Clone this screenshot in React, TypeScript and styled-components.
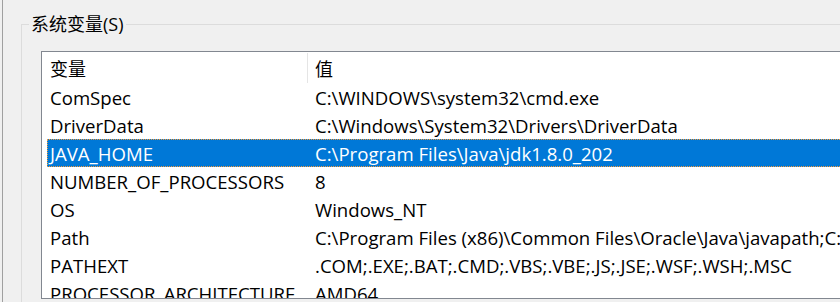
import styled, { createGlobalStyle } from 'styled-components'

const GlobalStyle = createGlobalStyle`
  html, body {
    margin: 0;
    padding: 0;
    background: #f0f0f0;
    overflow: hidden;
  }
  body {
    font-family: 'Open Sans', 'Noto Sans CJK SC', sans-serif;
    font-size: 18.6px;
    color: #000;
  }
`

const Window = styled.div`
  width: 840px;
  height: 302px;
  overflow: hidden;
  padding-left: 2px;
  box-sizing: border-box;
`

const Pane = styled.div`
  height: 100%;
  border-left: 1px solid #a0a0a0;
  padding-left: 18px;
  padding-top: 12px;
  box-sizing: border-box;
`

const Group = styled.fieldset`
  margin: 0;
  padding: 14px 0 0 0;
  border: 1px solid #dcdcdc;
  border-right: none;
  border-bottom: none;
  min-width: 0;
  height: 400px;
`

const Legend = styled.legend`
  margin-left: 7px;
  padding: 0 2px;
  line-height: 25px;
  font-size: 18px;
`

const ListBox = styled.div`
  width: 1000px;
  height: 248px;
  margin-left: 19px;
  box-sizing: border-box;
  border: 1px solid #828790;
  background: #fff;
  overflow: hidden;
`

const Header = styled.div`
  display: grid;
  grid-template-columns: 266px 1fr;
  height: 31px;
  align-items: stretch;
  font-size: 18px;
`

const HeaderCell = styled.div<{ $indent: number; $divider?: boolean }>`
  display: flex;
  align-items: center;
  padding-left: ${({ $indent }) => $indent}px;
  border-right: ${({ $divider }) => ($divider ? '1px solid #e5e5e5' : 'none')};
  margin: 1px 0 0;
`

const Row = styled.div<{ $selected?: boolean }>`
  display: grid;
  grid-template-columns: 261px 1fr;
  height: 28px;
  margin-left: 5px;
  align-items: center;
  white-space: nowrap;
  background: ${({ $selected }) => ($selected ? '#0078d7' : 'transparent')};
  color: ${({ $selected }) => ($selected ? '#fff' : '#000')};
  outline: ${({ $selected }) => ($selected ? '1px dotted #f59a3a' : 'none')};
  outline-offset: -1px;
`

const Cell = styled.span<{ $indent: number }>`
  padding-left: ${({ $indent }) => $indent}px;
  overflow: hidden;
`

const variables = [
  ['ComSpec', 'C:\\WINDOWS\\system32\\cmd.exe'],
  ['DriverData', 'C:\\Windows\\System32\\Drivers\\DriverData'],
  ['JAVA_HOME', 'C:\\Program Files\\Java\\jdk1.8.0_202'],
  ['NUMBER_OF_PROCESSORS', '8'],
  ['OS', 'Windows_NT'],
  ['Path', 'C:\\Program Files (x86)\\Common Files\\Oracle\\Java\\javapath;C:\\WINDOWS\\system32'],
  ['PATHEXT', '.COM;.EXE;.BAT;.CMD;.VBS;.VBE;.JS;.JSE;.WSF;.WSH;.MSC'],
  ['PROCESSOR_ARCHITECTURE', 'AMD64'],
]

export default function App() {
  return (
    <Window>
      <GlobalStyle />
      <Pane>
        <Group>
          <Legend>系统变量(S)</Legend>
          <ListBox>
            <Header>
              <HeaderCell $indent={8} $divider>变量</HeaderCell>
              <HeaderCell $indent={7}>值</HeaderCell>
            </Header>
            {variables.map(([name, value]) => (
              <Row key={name} $selected={name === 'JAVA_HOME'}>
                <Cell $indent={3}>{name}</Cell>
                <Cell $indent={7}>{value}</Cell>
              </Row>
            ))}
          </ListBox>
        </Group>
      </Pane>
    </Window>
  )
}
